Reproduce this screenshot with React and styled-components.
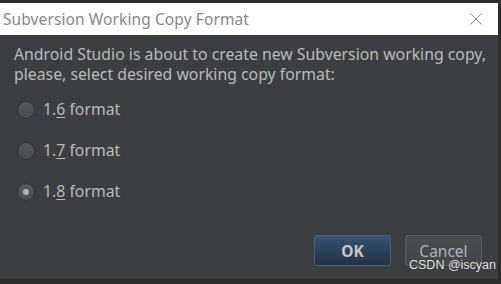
import React from "react";
import styled, { createGlobalStyle } from "styled-components";

const GlobalStyle = createGlobalStyle`
  body {
    margin: 0;
    background: #2b2d2e;
  }
`;

const Frame = styled.div`
  width: 501px;
  height: 284px;
  box-sizing: border-box;
  padding: 3px 3px 5px 0;
  background: #2b2d2e;
  position: relative;
  font-family: "Noto Sans", "Open Sans", sans-serif;
`;

const Dialog = styled.div`
  height: 100%;
  display: flex;
  flex-direction: column;
  background: #3c3f41;
`;

const TitleBar = styled.div`
  height: 32px;
  flex: none;
  display: flex;
  align-items: center;
  justify-content: space-between;
  padding: 0 16px 0 3px;
  background: #ffffff;
`;

const Title = styled.span`
  font-size: 15.5px;
  color: #878787;
  letter-spacing: 0.1px;
`;

const Close = styled.svg`
  width: 12px;
  height: 12px;
`;

const Body = styled.div`
  flex: 1;
  display: flex;
  flex-direction: column;
  padding: 9px 8px 0 14px;
`;

const Message = styled.p`
  margin: 0;
  font-size: 15.8px;
  line-height: 20px;
  color: #bbbbbb;
  white-space: nowrap;
`;

const Options = styled.div`
  display: flex;
  flex-direction: column;
  gap: 22px;
  margin-top: 16px;
  padding-left: 3px;
`;

const Option = styled.label`
  display: flex;
  align-items: center;
  gap: 8px;
  font-size: 15.8px;
  line-height: 19px;
  color: #bbbbbb;
`;

const Radio = styled.span`
  width: 18px;
  height: 18px;
  box-sizing: border-box;
  border-radius: 50%;
  border: 1px solid #2f3133;
  background: ${(p) =>
    p.checked
      ? "linear-gradient(#5a5d60, #4a4d50)"
      : "linear-gradient(#55585a, #4b4e50)"};
  display: flex;
  align-items: center;
  justify-content: center;

  &::after {
    content: "";
    display: ${(p) => (p.checked ? "block" : "none")};
    width: 6px;
    height: 6px;
    border-radius: 50%;
    background: #b4b4b4;
  }
`;

const Mnemonic = styled.span`
  text-decoration: underline;
  text-underline-offset: 2px;
`;

const Footer = styled.div`
  margin-top: auto;
  display: flex;
  justify-content: flex-end;
  gap: 14px;
  padding: 0 8px 13px 0;
`;

const Button = styled.button`
  width: 77px;
  height: 31px;
  box-sizing: border-box;
  border-radius: 3px;
  font-family: inherit;
  font-size: 15.5px;
  cursor: pointer;
  border: 1px solid ${(p) => (p.primary ? "#4a5f78" : "#5c6061")};
  background: ${(p) =>
    p.primary ? "linear-gradient(#385270, #233145)" : "linear-gradient(#4a4e50, #434749)"};
  color: ${(p) => (p.primary ? "#c8c8c8" : "#a6b4c3")};
  font-weight: ${(p) => (p.primary ? 700 : 400)};
`;

const Watermark = styled.span`
  position: absolute;
  left: 409px;
  top: 258px;
  font-family: "Liberation Sans", Arial, sans-serif;
  font-size: 12.5px;
  color: #e6e6e6;
  text-shadow: 0 0 1px #222;
`;

const formats = [
  { major: "1.", minor: "6", checked: false },
  { major: "1.", minor: "7", checked: false },
  { major: "1.", minor: "8", checked: true },
];

export default function App() {
  return (
    <>
      <GlobalStyle />
      <Frame>
        <Dialog>
          <TitleBar>
            <Title>Subversion Working Copy Format</Title>
            <Close viewBox="0 0 12 12">
              <path d="M0.5 0.5 L11.5 11.5 M11.5 0.5 L0.5 11.5" stroke="#8a8a8a" strokeWidth="1" fill="none" />
            </Close>
          </TitleBar>
          <Body>
            <Message>
              Android Studio is about to create new Subversion working copy,
              <br />
              please, select desired working copy format:
            </Message>
            <Options>
              {formats.map((f) => (
                <Option key={f.minor}>
                  <Radio checked={f.checked} />
                  <span>
                    {f.major}
                    <Mnemonic>{f.minor}</Mnemonic> format
                  </span>
                </Option>
              ))}
            </Options>
            <Footer>
              <Button primary>OK</Button>
              <Button>Cancel</Button>
            </Footer>
          </Body>
        </Dialog>
        <Watermark>CSDN @iscyan</Watermark>
      </Frame>
    </>
  );
}
